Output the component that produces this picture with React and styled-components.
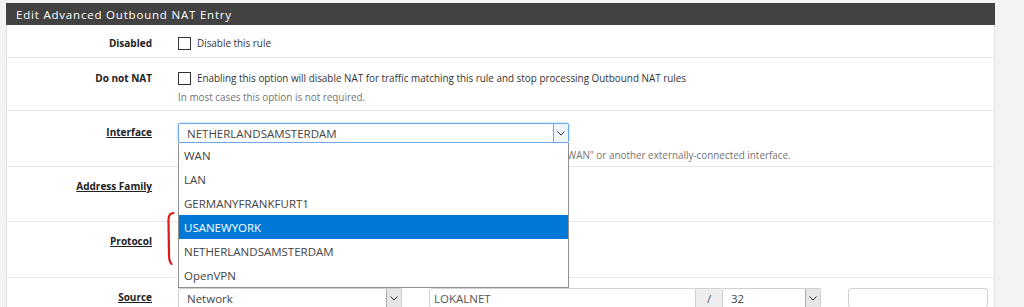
import React from "react";
import styled, { createGlobalStyle } from "styled-components";

const GlobalStyle = createGlobalStyle`
  html, body {
    margin: 0;
    background: #f3f3f3;
    font-family: "Open Sans", "Noto Sans", sans-serif;
  }
  * { box-sizing: border-box; }
`;

const Page = styled.div`
  position: relative;
  width: 1024px;
  height: 307px;
  overflow: hidden;
  padding: 3px 29px 0 6px;
`;

const Panel = styled.div`
  background: #fff;
  border-left: 1px solid #e2e2e2;
  border-right: 1px solid #e2e2e2;
`;

const Heading = styled.div`
  height: 22px;
  margin: 0 -1px;
  padding: 0 10px;
  display: flex;
  align-items: center;
  background: #424242;
  color: #fff;
  font-size: 11.5px;
  letter-spacing: 0.8px;
`;

const Row = styled.div`
  display: grid;
  grid-template-columns: 145px 1fr;
  column-gap: 26px;
  padding: ${(p) => p.$pad};
  border-bottom: 1px solid #e6e6e6;
`;

const Label = styled.div`
  text-align: right;
  font-size: 10px;
  font-weight: 700;
  color: #222;
  line-height: ${(p) => (p.$tall ? "19px" : "16px")};
  text-decoration: ${(p) => (p.$link ? "underline" : "none")};
`;

const Content = styled.div`
  font-size: 9.9px;
  color: #333;
  min-width: 0;
`;

const CheckLine = styled.label`
  display: flex;
  align-items: center;
  gap: 6px;
  height: 16px;
  white-space: nowrap;
`;

const Checkbox = styled.span`
  width: 13px;
  height: 13px;
  border: 1px solid #333;
  background: #fff;
  flex: none;
`;

const Help = styled.div`
  margin-top: ${(p) => p.$gap || 4}px;
  line-height: 16px;
  color: #737373;
  white-space: nowrap;
`;

const SelectWrap = styled.div`
  position: relative;
  width: ${(p) => p.$w}px;
`;

const SelectBox = styled.div`
  height: 20px;
  display: flex;
  align-items: center;
  border: 1px solid ${(p) => (p.$focus ? "#6aa6e8" : "#cfcfcf")};
  border-radius: 2px;
  box-shadow: ${(p) => (p.$focus ? "0 0 3px rgba(102,175,233,0.6)" : "none")};
  background: #fff;
  font-size: 11.5px;
  color: #444;
`;

const SelectText = styled.span`
  flex: 1;
  padding-left: 8px;
  white-space: nowrap;
  overflow: hidden;
`;

const Arrow = styled.span`
  width: 15px;
  align-self: stretch;
  display: flex;
  align-items: center;
  justify-content: center;
  background: ${(p) => (p.$focus ? "#eef5fc" : "#e6e6e6")};
  border-left: 1px solid ${(p) => (p.$focus ? "#6aa6e8" : "#adadad")};
`;

const DropList = styled.div`
  position: absolute;
  top: 100%;
  left: 0;
  width: 100%;
  background: #fff;
  border: 1px solid #8f8f8f;
  border-top: none;
  z-index: 5;
`;

const Option = styled.div`
  height: 24px;
  display: flex;
  align-items: center;
  padding-left: 5px;
  font-size: 11.5px;
  color: ${(p) => (p.$active ? "#fff" : "#444")};
  background: ${(p) => (p.$active ? "#0078d7" : "transparent")};
`;

const Inline = styled.div`
  display: flex;
  gap: 27px;
`;

const Group = styled.div`
  display: flex;
  width: 392px;
`;

const Input = styled.div`
  height: 20px;
  width: ${(p) => p.$w}px;
  display: flex;
  align-items: center;
  padding-left: 4px;
  border: 1px solid #d2d2d2;
  border-radius: ${(p) => p.$radius || "3px"};
  font-size: 11.5px;
  color: #555;
`;

const Addon = styled.div`
  width: 26px;
  height: 20px;
  display: flex;
  align-items: center;
  justify-content: center;
  background: #eee;
  border: 1px solid #d2d2d2;
  border-left: none;
  border-right: none;
  font-size: 11.5px;
  color: #555;
`;

const Mark = styled.svg`
  position: absolute;
  left: 160px;
  top: 208px;
  pointer-events: none;
`;

function Chevron() {
  return (
    <svg width="8" height="5" viewBox="0 0 8 5">
      <path d="M0.5 0.5 L4 4 L7.5 0.5" fill="none" stroke="#333" strokeWidth="1" />
    </svg>
  );
}

function Select({ value, width, focus, children }) {
  return (
    <SelectWrap $w={width}>
      <SelectBox $focus={focus}>
        <SelectText>{value}</SelectText>
        <Arrow $focus={focus}>
          <Chevron />
        </Arrow>
      </SelectBox>
      {children}
    </SelectWrap>
  );
}

const interfaces = ["WAN", "LAN", "GERMANYFRANKFURT1", "USANEWYORK", "NETHERLANDSAMSTERDAM", "OpenVPN"];

export default function App() {
  return (
    <>
      <GlobalStyle />
      <Page>
        <Panel>
          <Heading>Edit Advanced Outbound NAT Entry</Heading>

          <Row $pad="10px 0 6px">
            <Label>Disabled</Label>
            <Content>
              <CheckLine>
                <Checkbox />
                Disable this rule
              </CheckLine>
            </Content>
          </Row>

          <Row $pad="12px 0 5px">
            <Label>Do not NAT</Label>
            <Content>
              <CheckLine>
                <Checkbox />
                Enabling this option will disable NAT for traffic matching this rule and stop processing Outbound NAT rules
              </CheckLine>
              <Help $gap={3}>In most cases this option is not required.</Help>
            </Content>
          </Row>

          <Row $pad="12px 0 3px">
            <Label $tall $link>Interface</Label>
            <Content>
              <Select value="NETHERLANDSAMSTERDAM" width={391} focus>
                <DropList>
                  {interfaces.map((name) => (
                    <Option key={name} $active={name === "USANEWYORK"}>
                      {name}
                    </Option>
                  ))}
                </DropList>
              </Select>
              <Help>
                The interface on which traffic is matched as it exits the firewall. In most cases this is "WAN" or another externally-connected interface.
              </Help>
            </Content>
          </Row>

          {/* value and help of these two rows lie under the open list */}
          <Row $pad="10px 0 24px">
            <Label $tall $link>Address Family</Label>
            <Content>
              <Select width={391} />
            </Content>
          </Row>

          <Row $pad="10px 0 25px">
            <Label $tall $link>Protocol</Label>
            <Content>
              <Select width={391} />
            </Content>
          </Row>

          <Row $pad="10px 0 10px">
            <Label $tall $link>Source</Label>
            <Content>
              <Inline>
                <Select value="Network" width={224} />
                <Group>
                  <Input $w={267} $radius="3px 0 0 3px">LOKALNET</Input>
                  <Addon>/</Addon>
                  <Select value="32" width={99} />
                </Group>
                <Input $w={140} />
              </Inline>
            </Content>
          </Row>
        </Panel>

        <Mark width="20" height="64" viewBox="0 0 20 64">
          <path
            d="M13.5 5 Q8 5 8.5 14 L9 46 Q9 54 11.5 56"
            fill="none"
            stroke="#e0161b"
            strokeWidth="2.2"
            strokeLinecap="round"
          />
        </Mark>
      </Page>
    </>
  );
}
